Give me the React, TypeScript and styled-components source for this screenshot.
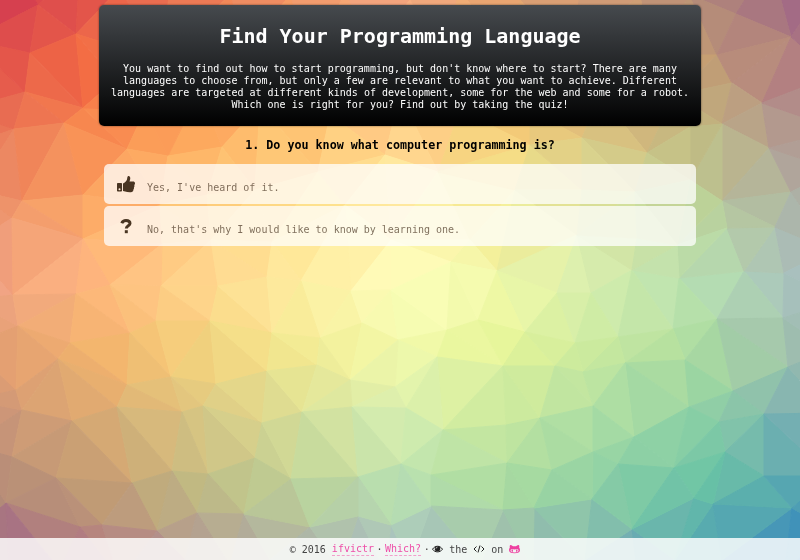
import React from "react";
import styled, { createGlobalStyle } from "styled-components";

const GlobalStyle = createGlobalStyle`
  * { box-sizing: border-box; }
  body { margin: 0; font-family: "DejaVu Sans Mono", "Liberation Mono", monospace; font-size: 10px; }
`;

type Point = [number, number];

const points: Point[] = [
  [-45, -30], [10, -40], [80, -35], [150, -30], [210, -40], [280, -30], [350, -40], [420, -30], [490, -35], [550, -40], [620, -30], [680, -35], [770, -40], [840, -35],
  [-30, 40], [-40, 110], [-30, 145], [-25, 190], [-30, 245], [-30, 300], [-30, 345], [-30, 400], [-30, 445], [-20, 525], [-30, 590],
  [38, 5], [76, 34], [30, 53], [25, 92], [83, 108], [64, 123], [14, 129], [22, 201], [83, 195], [127, 149], [168, 156], [222, 147], [12, 218], [83, 239],
  [120, -12], [170, -10], [230, -5], [290, -5], [345, -8], [410, 0], [460, -10], [520, 0], [580, -5], [640, -5], [690, -5],
  [115, 80], [160, 60], [145, 110], [200, 90], [245, 50], [260, 105], [310, 70], [330, 115], [370, 50], [400, 95], [440, 60], [460, 110], [510, 60], [530, 110], [570, 55], [600, 95], [650, 55], [675, 95],
  [162, 244], [160, 205], [211, 240], [207, 195], [255, 190], [272, 242], [318, 172], [345, 205], [385, 155], [391, 240], [438, 172], [470, 240], [515, 190], [530, 145], [577, 235],
  [13, 295], [76, 294], [110, 285], [161, 286], [218, 286], [18, 326], [70, 343], [130, 333], [156, 321], [210, 321], [58, 359], [127, 385], [171, 377], [216, 384], [16, 390], [22, 410], [72, 421], [117, 407], [182, 412], [203, 406], [262, 423], [267, 371], [12, 457], [56, 478], [132, 483], [172, 471], [208, 474], [255, 458], [6, 503], [80, 527], [102, 525], [157, 531], [197, 513], [244, 514],
  [10, 590], [60, 570], [120, 580], [185, 560], [230, 565], [270, 560], [340, 570], [385, 570], [410, 565], [480, 565], [533, 570], [585, 560], [640, 590], [675, 560], [722, 560], [785, 570], [830, 600],
  [267, 277], [301, 281], [351, 291], [362, 323], [320, 338], [272, 333], [398, 340], [447, 330], [451, 262], [391, 290], [497, 271], [478, 320], [525, 332], [437, 357], [503, 366], [350, 380], [395, 387], [317, 365], [302, 412], [352, 407], [406, 408], [443, 430], [506, 425], [401, 464], [358, 477], [291, 479], [431, 475], [507, 463], [431, 506], [503, 510], [391, 525], [358, 516], [310, 527],
  [557, 293], [591, 293], [632, 270], [679, 278], [744, 271], [784, 273], [717, 319], [783, 318], [673, 329], [618, 337], [575, 343], [555, 366], [583, 372], [625, 363], [685, 360], [788, 367], [733, 391], [689, 407], [593, 406], [540, 418], [634, 437], [719, 422], [764, 414], [725, 452], [593, 452], [618, 464], [674, 468], [552, 470], [764, 476], [592, 499], [534, 508], [632, 529], [694, 498], [713, 504], [792, 508],
  [736, 14], [791, 37], [717, 55], [732, 83], [762, 103], [722, 124], [769, 148], [722, 201], [791, 192], [727, 228], [775, 227], [582, 138], [647, 153], [690, 127], [690, 180], [635, 192], [582, 190], [637, 238], [677, 245],
  [835, 75], [840, 130], [835, 170], [830, 250], [840, 300], [830, 350], [830, 413], [830, 476], [830, 530],
];

type Color = [number, number, number];

const whitePoint: Color = [0.9505, 1, 1.089];

/* sRGB hex to CIE Lab. */
const toLab = (hex: string): Color => {
  const [r, g, b] = [1, 3, 5].map((i) => {
    const v = parseInt(hex.slice(i, i + 2), 16) / 255;
    return v <= 0.04045 ? v / 12.92 : ((v + 0.055) / 1.055) ** 2.4;
  });
  const xyz = [
    0.4124 * r + 0.3576 * g + 0.1805 * b,
    0.2126 * r + 0.7152 * g + 0.0722 * b,
    0.0193 * r + 0.1192 * g + 0.9505 * b,
  ];
  const [fx, fy, fz] = xyz.map((v, i) => {
    const t = v / whitePoint[i];
    return t > 0.008856 ? Math.cbrt(t) : 7.787 * t + 16 / 116;
  });
  return [116 * fy - 16, 500 * (fx - fy), 200 * (fy - fz)];
};

const toRgb = ([l, a, b]: Color) => {
  const fy = (l + 16) / 116;
  const [x, y, z] = [fy + a / 500, fy, fy - b / 200].map(
    (f, i) => whitePoint[i] * (f > 0.2069 ? f ** 3 : (f - 16 / 116) / 7.787),
  );
  const linear = [
    3.2406 * x - 1.5372 * y - 0.4986 * z,
    -0.9689 * x + 1.8758 * y + 0.0415 * z,
    0.0557 * x - 0.204 * y + 1.057 * z,
  ];
  const rgb = linear.map((v) => {
    const s = v <= 0.0031308 ? 12.92 * v : 1.055 * v ** (1 / 2.4) - 0.055;
    return Math.round(Math.max(0, Math.min(1, s)) * 255);
  });
  return `rgb(${rgb.join(",")})`;
};

const mix = (from: Color, to: Color, t: number) => from.map((v, i) => v + (to[i] - v) * t) as Color;

const palette = ["#d53e4f", "#f46d43", "#fdae61", "#fee08b", "#ffffbf", "#e6f598", "#abdda4", "#66c2a5", "#3288bd"].map(toLab);

const scale = (t: number) => {
  const at = Math.max(0, Math.min(1, t)) * (palette.length - 1);
  const index = Math.min(palette.length - 2, Math.floor(at));
  return mix(palette[index], palette[index + 1], at - index);
};

const shade = (x: number, y: number) => toRgb(mix(scale(x / 800), scale(y / 560), 0.5));

type Triangle = [number, number, number];

const inCircle = (vertices: Point[], [a, b, c]: Triangle, [px, py]: Point) => {
  const [ax, ay] = vertices[a];
  const [bx, by] = vertices[b];
  const [cx, cy] = vertices[c];
  const d = 2 * (ax * (by - cy) + bx * (cy - ay) + cx * (ay - by));
  if (d === 0) return false;
  const a2 = ax * ax + ay * ay;
  const b2 = bx * bx + by * by;
  const c2 = cx * cx + cy * cy;
  const ux = (a2 * (by - cy) + b2 * (cy - ay) + c2 * (ay - by)) / d;
  const uy = (a2 * (cx - bx) + b2 * (ax - cx) + c2 * (bx - ax)) / d;
  return Math.hypot(px - ux, py - uy) < Math.hypot(ax - ux, ay - uy);
};

/* Bowyer-Watson Delaunay triangulation. */
const triangulate = (source: Point[]) => {
  const n = source.length;
  const vertices: Point[] = [...source, [-9000, -9000], [9000, -9000], [0, 15000]];
  let triangles: Triangle[] = [[n, n + 1, n + 2]];
  for (let i = 0; i < n; i++) {
    const bad = triangles.filter((t) => inCircle(vertices, t, vertices[i]));
    const edges = new Map<string, [number, number] | null>();
    bad.forEach(([a, b, c]) =>
      [[a, b], [b, c], [c, a]].forEach(([s, e]) => {
        const key = s < e ? `${s}-${e}` : `${e}-${s}`;
        edges.set(key, edges.has(key) ? null : [s, e]);
      }),
    );
    triangles = triangles.filter((t) => !bad.includes(t));
    edges.forEach((edge) => {
      if (edge) triangles.push([edge[0], edge[1], i]);
    });
  }
  return triangles.filter((t) => t.every((v) => v < n));
};

const mesh = triangulate(points).map((t) => {
  const corners = t.map((i) => points[i]);
  const x = (corners[0][0] + corners[1][0] + corners[2][0]) / 3;
  const y = (corners[0][1] + corners[1][1] + corners[2][1]) / 3;
  return { outline: corners.map((p) => p.join(",")).join(" "), fill: shade(x, y) };
});

const ThumbIcon = () => (
  <svg width="18" height="18" viewBox="0 0 18 18" fill="currentColor" aria-hidden="true">
    <path
      fillRule="evenodd"
      d="M.8 8h3.4q.8 0 .8.8v6.9q0 .8-.8.8H.8q-.8 0-.8-.8V8.800Q0 8 .8 8zM2.500 13.200a1 1 0 1 0 0 2 1 1 0 0 0 0-2z"
    />
    <path d="M6 8.500c2-1 3.300-2.300 4-4 .3-1 .1-2.200.7-3.100.5-.8 1.800-.5 2.300.5.6 1.300.2 2.900-.5 4.600h3.600c1.200 0 2 .9 1.900 1.900 0 .7-.4 1.200-.8 1.500.5.9.3 1.900-.3 2.500.3.9 0 1.800-.6 2.300.2 1.500-.8 2.500-2.400 2.600-2.300.2-4.200-.2-5.800-.8L6 16z" />
  </svg>
);

const QuestionIcon = () => (
  <svg width="18" height="18" viewBox="0 0 18 18" fill="none" stroke="currentColor" aria-hidden="true">
    <path strokeWidth="3" d="M4.800 6.200C5.500 4.300 7 3.500 9 3.500c2.400 0 4 1.100 4 3 0 2.300-3.700 2.400-3.700 5.100" />
    <path strokeWidth="3" d="M9.300 13.200v3" />
  </svg>
);

const EyeIcon = () => (
  <svg width="11" height="10" viewBox="0 0 22 20" aria-label="View" role="img">
    <path fill="none" stroke="currentColor" strokeWidth="2" d="M1 10.500C6 2.500 16 2.500 21 10.500 16 17.500 6 17.500 1 10.500z" />
    <circle cx="11" cy="9.500" r="5.500" fill="currentColor" />
    <path fill="none" stroke="#eee" strokeWidth="1.500" d="M8 9q.3-2.700 3-3" />
  </svg>
);

const CodeIcon = () => (
  <svg width="12" height="10" viewBox="0 0 24 20" fill="none" stroke="currentColor" strokeWidth="2" aria-label="code" role="img">
    <path d="M7 5 2 10l5 5M17 5l5 5-5 5M14 3l-4 14" />
  </svg>
);

const CatIcon = () => (
  <svg width="11" height="10" viewBox="0 0 22 20" aria-hidden="true">
    <path
      fill="currentColor"
      fillRule="evenodd"
      d="M2 2q3 0 6 2.500h6Q17 2 20 2q1 3 .4 5.500Q22 9 22 12c0 5-4 6.500-11 6.500S0 17 0 12q0-3 1.600-4.500Q1 5 2 2zM6 10.500c-2 0-3 1-3 2.700 0 3 3 3.600 8 3.600s8-.6 8-3.600c0-1.700-1-2.700-3-2.700-2 0-3 .4-5 .4s-3-.4-5-.4z"
    />
    <ellipse cx="6.500" cy="13.500" rx="1.500" ry="2.300" fill="currentColor" />
    <ellipse cx="15.500" cy="13.500" rx="1.500" ry="2.300" fill="currentColor" />
  </svg>
);

const Backdrop = styled.svg`
  position: fixed;
  inset: 0;
  z-index: -1;
  width: 100%;
  height: 100%;
`;

const Page = styled.div`
  min-height: 100vh;
  display: flex;
  flex-direction: column;
`;

const Content = styled.main`
  flex: 1;
  width: 100%;
  max-width: 602px;
  margin: 0 auto;
  padding-top: 5px;
`;

const Header = styled.header`
  padding: 16px 10px 15px;
  border-radius: 5px;
  background: linear-gradient(#464a4e, #000);
  box-shadow: 0 0 2px rgba(0, 0, 0, 0.6);
  color: #fff;
  text-align: center;
`;

const Title = styled.h1`
  margin: 0 0 12px;
  font-size: 20px;
  line-height: 30px;
`;

const Intro = styled.p`
  margin: 0;
  line-height: 12px;
`;

const Question = styled.h3`
  margin: 8px 0;
  color: #000;
  line-height: 22px;
  text-align: center;
`;

const Options = styled.div`
  display: flex;
  flex-direction: column;
  gap: 2px;
  padding: 0 5px;
`;

const Option = styled.button`
  display: flex;
  align-items: center;
  gap: 10px;
  height: 40px;
  padding: 0 11px;
  border: 0;
  border-radius: 5px;
  background: rgba(255, 255, 255, 0.75);
  color: #493522;
  font: inherit;
  text-align: left;
  cursor: pointer;
`;

const OptionIcon = styled.span`
  display: flex;
  justify-content: center;
  width: 22px;
`;

const OptionLabel = styled.span`
  padding-top: 6px;
  opacity: 0.7;
`;

const Footer = styled.footer`
  display: flex;
  align-items: center;
  justify-content: center;
  gap: 6px;
  height: 22px;
  padding-left: 10px;
  background: rgba(255, 255, 255, 0.83);
  color: #444;
`;

const FooterLinks = styled.span`
  display: flex;
  align-items: center;
`;

const Separator = styled.span`
  width: 11px;
  text-align: center;
`;

const FooterLink = styled.a`
  border-bottom: 1px dashed #f2a0cc;
  color: #ee4fa8;
  line-height: 12px;
  text-decoration: none;
`;

const IconLink = styled.a`
  display: flex;
  color: #ee3fa0;
`;

const FooterIcon = styled.span`
  display: flex;
  color: #222;
`;

export default function App() {
  return (
    <>
      <GlobalStyle />
      <Backdrop viewBox="0 0 800 560" preserveAspectRatio="xMidYMid slice" aria-hidden="true">
        {mesh.map(({ outline, fill }) => (
          <polygon key={outline} points={outline} fill={fill} stroke={fill} strokeWidth={1} />
        ))}
      </Backdrop>
      <Page>
        <Content>
          <Header>
            <Title>Find Your Programming Language</Title>
            <Intro>
              You want to find out how to start programming, but don't know where to start? There are many languages to
              choose from, but only a few are relevant to what you want to achieve. Different languages are targeted at
              different kinds of development, some for the web and some for a robot. Which one is right for you? Find out
              by taking the quiz!
            </Intro>
          </Header>
          <Question>1. Do you know what computer programming is?</Question>
          <Options>
            <Option type="button">
              <OptionIcon><ThumbIcon /></OptionIcon>
              <OptionLabel>Yes, I've heard of it.</OptionLabel>
            </Option>
            <Option type="button">
              <OptionIcon><QuestionIcon /></OptionIcon>
              <OptionLabel>No, that's why I would like to know by learning one.</OptionLabel>
            </Option>
          </Options>
        </Content>
        <Footer>
          <span>© 2016</span>
          <FooterLinks>
            <FooterLink href="#author">ifvictr</FooterLink>
            <Separator>·</Separator>
            <FooterLink href="#which">Which?</FooterLink>
            <Separator>·</Separator>
            <FooterIcon><EyeIcon /></FooterIcon>
          </FooterLinks>
          <span>the</span>
          <FooterIcon><CodeIcon /></FooterIcon>
          <span>on</span>
          <IconLink href="#github" aria-label="GitHub"><CatIcon /></IconLink>
        </Footer>
      </Page>
    </>
  );
}
